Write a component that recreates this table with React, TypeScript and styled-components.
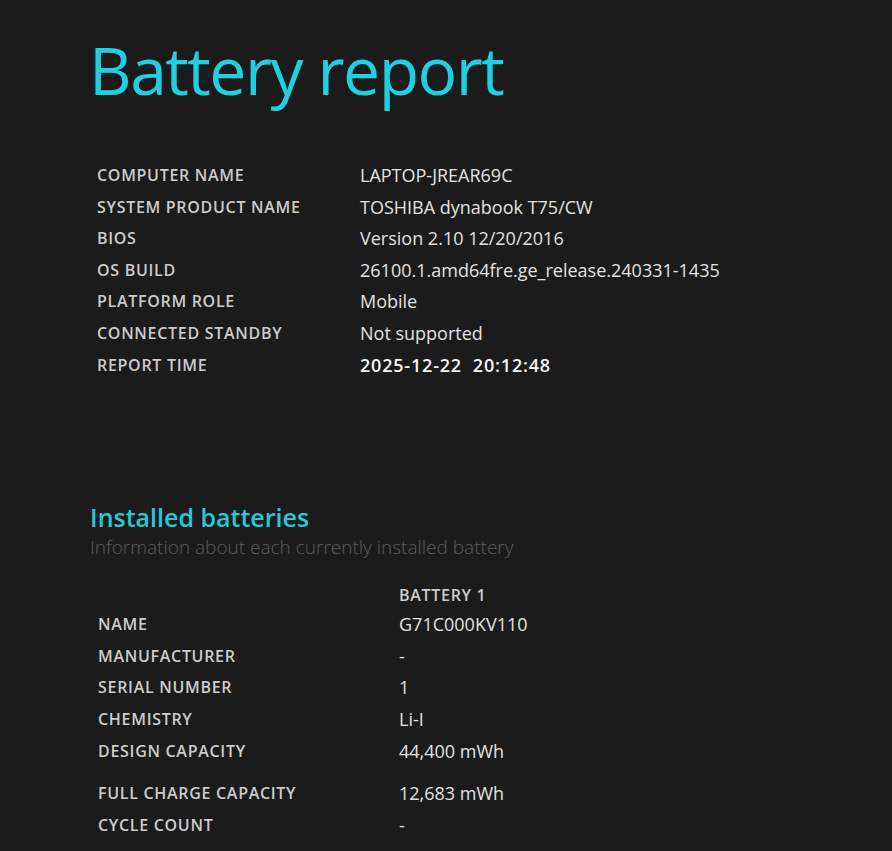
import styled, { createGlobalStyle } from "styled-components";

const GlobalStyle = createGlobalStyle`
  html, body {
    margin: 0;
    background: #1b1b1b;
  }
  body {
    font-family: "Open Sans", "Noto Sans", sans-serif;
  }
`;

const Page = styled.div`
  padding: 27px 0 0 92px;
  min-height: 851px;
  box-sizing: border-box;
  color: #dcdcdc;
`;

const Title = styled.h1`
  margin: 0 0 0 -3px;
  font-size: 66px;
  font-weight: 400;
  line-height: 84px;
  letter-spacing: -1.5px;
  color: #22cfe0;
`;

const InfoTable = styled.div<{ $valueCol: number; $indent: number }>`
  display: grid;
  grid-template-columns: ${(p) => p.$valueCol}px auto;
  margin-left: ${(p) => p.$indent}px;
  justify-content: start;
`;

const Label = styled.div<{ $tall?: boolean }>`
  font-size: 16px;
  font-weight: 600;
  color: #cccccc;
  line-height: 31.6px;
  letter-spacing: 0.7px;
  padding-top: ${(p) => (p.$tall ? 11 : 0)}px;
`;

const Value = styled.div<{ $strong?: boolean; $tall?: boolean }>`
  font-size: 18px;
  font-weight: ${(p) => (p.$strong ? 600 : 400)};
  color: ${(p) => (p.$strong ? "#f4f4f4" : "#e2e2e2")};
  line-height: 31.6px;
  letter-spacing: ${(p) => (p.$strong ? 0.8 : 0)}px;
  padding-top: ${(p) => (p.$tall ? 11 : 0)}px;
  white-space: pre;
`;

const ColumnHead = styled.div`
  font-size: 16px;
  font-weight: 600;
  color: #cccccc;
  letter-spacing: 0.7px;
  line-height: 28px;
`;

const Section = styled.section`
  margin-top: 121px;
`;

const SectionTitle = styled.h2`
  margin: 0 0 0 -2px;
  font-size: 25px;
  font-weight: 600;
  line-height: 30px;
  letter-spacing: 0;
  color: #28c8d6;
`;

const SectionSub = styled.p`
  margin: 2px 0 21px -2px;
  font-size: 19px;
  font-weight: 300;
  line-height: 26px;
  letter-spacing: 0;
  color: #5c5c5c;
`;

const systemRows: [string, string, boolean?][] = [
  ["COMPUTER NAME", "LAPTOP-JREAR69C"],
  ["SYSTEM PRODUCT NAME", "TOSHIBA dynabook T75/CW"],
  ["BIOS", "Version 2.10 12/20/2016"],
  ["OS BUILD", "26100.1.amd64fre.ge_release.240331-1435"],
  ["PLATFORM ROLE", "Mobile"],
  ["CONNECTED STANDBY", "Not supported"],
  ["REPORT TIME", "2025-12-22  20:12:48", true],
];

const batteryRows: [string, string, boolean?][] = [
  ["NAME", "G71C000KV110"],
  ["MANUFACTURER", "-"],
  ["SERIAL NUMBER", "1"],
  ["CHEMISTRY", "Li-I"],
  ["DESIGN CAPACITY", "44,400 mWh"],
  ["FULL CHARGE CAPACITY", "12,683 mWh", true],
  ["CYCLE COUNT", "-"],
];

export default function App() {
  return (
    <>
      <GlobalStyle />
      <Page>
        <Title>Battery report</Title>

        <InfoTable $valueCol={263} $indent={5} style={{ marginTop: 49 }}>
          {systemRows.map(([label, value, strong]) => (
            <>
              <Label key={label}>{label}</Label>
              <Value key={label + "-v"} $strong={strong}>
                {value}
              </Value>
            </>
          ))}
        </InfoTable>

        <Section>
          <SectionTitle>Installed batteries</SectionTitle>
          <SectionSub>Information about each currently installed battery</SectionSub>

          <InfoTable $valueCol={301} $indent={6}>
            <div />
            <ColumnHead>BATTERY 1</ColumnHead>
            {batteryRows.map(([label, value, tall]) => (
              <>
                <Label key={label} $tall={tall}>
                  {label}
                </Label>
                <Value key={label + "-v"} $tall={tall}>
                  {value}
                </Value>
              </>
            ))}
          </InfoTable>
        </Section>
      </Page>
    </>
  );
}
